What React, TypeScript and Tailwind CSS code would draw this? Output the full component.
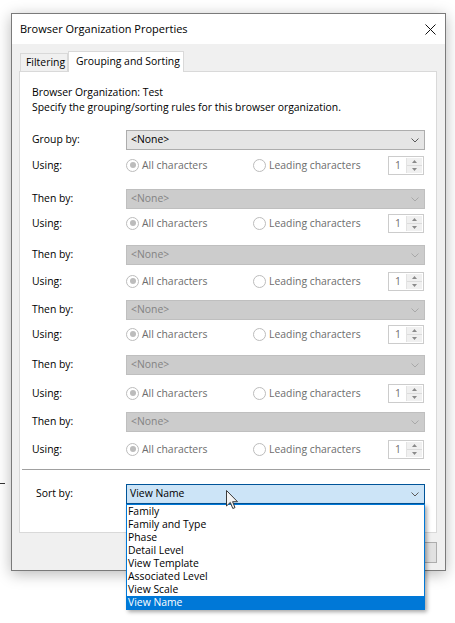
import React from 'react';

type Variant = 'enabled' | 'disabled' | 'focused';

const groups = [
  { label: 'Group by:', enabled: true, comboGap: 'mt-[15px]', usingGap: 'mt-[6px]' },
  { label: 'Then by:', enabled: false, comboGap: 'mt-[14px]', usingGap: 'mt-[5px]' },
  { label: 'Then by:', enabled: false, comboGap: 'mt-[12px]', usingGap: 'mt-[7px]' },
  { label: 'Then by:', enabled: false, comboGap: 'mt-[9px]', usingGap: 'mt-[5px]' },
  { label: 'Then by:', enabled: false, comboGap: 'mt-[11px]', usingGap: 'mt-[9px]' },
  { label: 'Then by:', enabled: false, comboGap: 'mt-[9px]', usingGap: 'mt-[8px]' },
];

const sortOptions = [
  'Family',
  'Family and Type',
  'Phase',
  'Detail Level',
  'View Template',
  'Associated Level',
  'View Scale',
  'View Name',
];

const comboStyles: Record<Variant, string> = {
  enabled: 'bg-[#e5e5e5] border-[#adadad] text-black pl-[4px]',
  disabled: 'bg-[#cccccc] border-[#bfbfbf] text-[#838383] pl-[4px]',
  focused: 'bg-[#cce4f7] border-[#005499] text-black pl-[3px]',
};

function Chevron({ color }: { color: string }) {
  return (
    <svg width="8" height="5" viewBox="0 0 8 5" fill="none">
      <path d="M0.5 0.5 L4 4 L7.5 0.5" stroke={color} strokeWidth="1" />
    </svg>
  );
}

function Combo({ value, variant }: { value: string; variant: Variant }) {
  return (
    <div className={`w-[299px] h-[20px] border flex items-center justify-between pr-[5px] ${comboStyles[variant]}`}>
      <span>{value}</span>
      <Chevron color={variant === 'disabled' ? '#a8a8a8' : '#5a5a5a'} />
    </div>
  );
}

function Radio({ checked, label }: { checked: boolean; label: string }) {
  return (
    <div className="flex items-center gap-[3px]">
      <span className="w-[13px] h-[13px] rounded-full border border-[#bcbcbc] bg-white flex items-center justify-center">
        {checked && <span className="w-[6px] h-[6px] rounded-full bg-[#bcbcbc]" />}
      </span>
      <span className="text-[#6d6d6d]">{label}</span>
    </div>
  );
}

function Spinner() {
  return (
    <div className="w-[36px] h-[19px] border border-[#cccccc] bg-white flex">
      <div className="flex-1 pl-[6px] text-[#6d6d6d] leading-[17px]">1</div>
      <div className="w-[16px] my-[1px] mr-[1px] flex flex-col border-l border-[#e3e3e3]">
        <div className="flex-1 bg-[#f0f0f0] flex items-center justify-center border-b border-[#dcdcdc]">
          <svg width="5" height="3" viewBox="0 0 5 3">
            <path d="M0 3 L2.5 0 L5 3 Z" fill="#8a8a8a" />
          </svg>
        </div>
        <div className="flex-1 bg-[#f0f0f0] flex items-center justify-center">
          <svg width="5" height="3" viewBox="0 0 5 3">
            <path d="M0 0 L5 0 L2.5 3 Z" fill="#8a8a8a" />
          </svg>
        </div>
      </div>
    </div>
  );
}

function Cursor() {
  return (
    <svg width="13" height="20" viewBox="0 0 13 20">
      <path
        d="M0.5 0.5 L0.5 16 L4.3 12.4 L6.8 18.5 L9 17.6 L6.6 11.7 L11.5 11.7 Z"
        fill="#f4f4f4"
        stroke="#3a3a3a"
        strokeWidth="1"
        strokeLinejoin="round"
      />
    </svg>
  );
}

export default function App() {
  return (
    <div className="relative w-[455px] h-[623px] bg-white overflow-hidden font-['Open_Sans',sans-serif] text-[10.4px] text-black">
      <div className="absolute left-0 top-[483px] w-[5px] h-px bg-[#333]" />

      <div className="ml-[11px] pt-[13px]">
        <div className="w-[435px] h-[558px] border border-[#7a7a7a] bg-[#f0f0f0] flex flex-col shadow-[0_3px_14px_rgba(0,0,0,0.28)]">
          <div className="h-[30px] bg-white flex items-center justify-between pl-[8px] pr-[9px]">
            <span className="text-[11px]">Browser Organization Properties</span>
            <svg width="11" height="11" viewBox="0 0 11 11">
              <path d="M0.5 0.5 L10.5 10.5 M10.5 0.5 L0.5 10.5" stroke="#111" strokeWidth="1" />
            </svg>
          </div>

          <div className="ml-[7px] pt-[7px] flex items-end h-[27px] pl-px">
            <div className="h-[18px] w-[48px] border border-b-0 border-[#d9d9d9] bg-[#f0f0f0] flex items-center pl-[5px]">
              Filtering
            </div>
            <div className="relative z-10 h-[21px] -mb-px w-[116px] border border-b-0 border-[#d9d9d9] bg-white flex items-center pl-[7px]">
              Grouping and Sorting
            </div>
          </div>

          <div className="ml-[7px] w-[418px] h-[462px] border border-[#d9d9d9] bg-white pt-[13px] pl-[12px] flex flex-col">
            <div className="leading-[15px]">Browser Organization: Test</div>
            <div className="leading-[15px]">Specify the grouping/sorting rules for this browser organization.</div>

            {groups.map((g, i) => (
              <React.Fragment key={i}>
                <div className={`flex items-center ${g.comboGap}`}>
                  <span className="w-[94px]">{g.label}</span>
                  <Combo value="<None>" variant={g.enabled ? 'enabled' : 'disabled'} />
                </div>
                <div className={`flex items-center h-[19px] ${g.usingGap}`}>
                  <span className="w-[94px]">Using:</span>
                  <div className="w-[127px]">
                    <Radio checked label="All characters" />
                  </div>
                  <div className="w-[135px]">
                    <Radio checked={false} label="Leading characters" />
                  </div>
                  <Spinner />
                </div>
              </React.Fragment>
            ))}

            <div className="mt-[10px] -ml-[10px] w-[408px] h-px bg-[#a0a0a0]" />

            <div className="flex items-center mt-[14px]">
              <span className="w-[94px] pl-[4px]">Sort by:</span>
              <div className="relative">
                <Combo value="View Name" variant="focused" />
                <div className="absolute left-0 top-[20px] z-20 w-[299px] border border-[#0078d7] bg-white shadow-[2px_2px_4px_rgba(0,0,0,0.35)]">
                  {sortOptions.map((opt) => (
                    <div
                      key={opt}
                      className={`h-[13px] leading-[13px] pl-[1px] ${
                        opt === 'View Name' ? 'bg-[#0078d7] text-white' : 'text-black'
                      }`}
                    >
                      {opt}
                    </div>
                  ))}
                </div>
                <div className="absolute left-[100px] top-[6px] z-30">
                  <Cursor />
                </div>
              </div>
            </div>
          </div>

          <div className="ml-[7px] w-[418px] mt-[9px] flex justify-end gap-[6px]">
            <div className="w-[75px] h-[21px] border border-[#adadad] bg-[#e1e1e1] flex items-center justify-center">OK</div>
            <div className="w-[75px] h-[21px] border border-[#adadad] bg-[#e1e1e1] flex items-center justify-center">Cancel</div>
            <div className="w-[75px] h-[21px] border border-[#adadad] bg-[#e1e1e1] flex items-center justify-center">Help</div>
          </div>
        </div>
      </div>
    </div>
  );
}
